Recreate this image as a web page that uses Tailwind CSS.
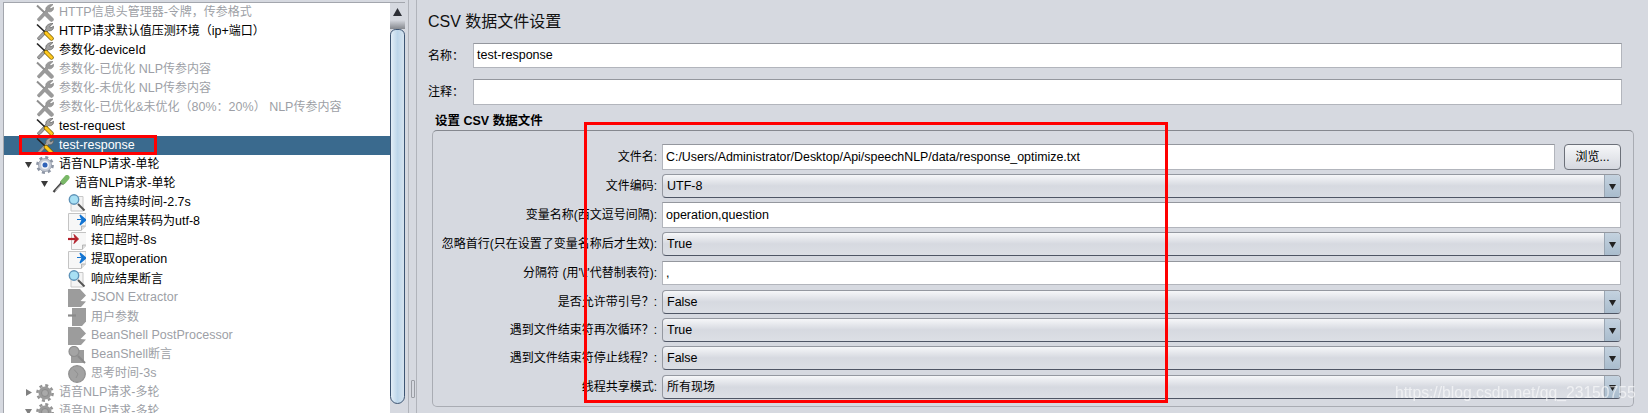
<!DOCTYPE html>
<html lang="zh-CN">
<head>
  <meta charset="UTF-8" />
  <title>CSV 数据文件设置</title>
  <script src="https://cdn.jsdelivr.net/npm/@tailwindcss/browser@4"></script>
</head>
<body class="bg-[#d6d9e0] overflow-hidden">
  <svg width="0" height="0" class="absolute">
    <defs>
      <symbol id="tool" viewBox="0 0 18 18">
        <path d="M17 .5 13.800 3.400l.8 1.600 2.900-1.700c.6 2.900-2.300 5.200-5 4.300L4 16.500c-1 1.200-3.200-.6-2.200-1.800L10 6c-1-3 3-6 7-5.500Z" fill="#a2a2a2" stroke="#5a5a5a" stroke-width=".7"/>
        <path d="M1 1.500 9.500 9.500" stroke="#222" stroke-width="1.600"/>
        <path d="M10 10 15.500 15.500" stroke="#7a5e00" stroke-width="4.400" stroke-linecap="round"/>
        <path d="M10 10 15.500 15.500" stroke="#ffc81e" stroke-width="3" stroke-linecap="round"/>
      </symbol>
      <symbol id="tool-off" viewBox="0 0 18 18">
        <path d="M17 .5 13.800 3.400l.8 1.600 2.900-1.700c.6 2.900-2.300 5.200-5 4.300L4 16.500c-1 1.200-3.200-.6-2.200-1.800L10 6c-1-3 3-6 7-5.500Z" fill="#9a9a9a" stroke="#8a8a8a" stroke-width=".8"/>
        <path d="M1 1.500 9.500 9.500" stroke="#8f8f8f" stroke-width="2"/>
        <path d="M10 10 15.500 15.500" stroke="#9a9a9a" stroke-width="4.500" stroke-linecap="round"/>
      </symbol>
      <symbol id="gear" viewBox="0 0 18 18">
        <circle cx="9" cy="9" r="7.600" fill="none" stroke="#8d95a4" stroke-width="2.600" stroke-dasharray="3 2.970"/>
        <circle cx="9" cy="9" r="6.500" fill="#c6cbd5" stroke="#8d95a4" stroke-width=".8"/>
        <circle cx="9" cy="9" r="3.900" fill="#f2f4f8"/>
        <circle cx="9" cy="9" r="2.500" fill="#2f62b8"/>
      </symbol>
      <symbol id="gear-off" viewBox="0 0 18 18">
        <circle cx="9" cy="9" r="7.600" fill="none" stroke="#949494" stroke-width="2.600" stroke-dasharray="3 2.970"/>
        <circle cx="9" cy="9" r="6.500" fill="#9a9a9a"/>
        <circle cx="9" cy="9" r="3.500" fill="#a9a9a9" stroke="#8a8a8a"/>
      </symbol>
      <symbol id="dropper" viewBox="0 0 18 18">
        <path d="M1.500 17 10.500 7" stroke="#444" stroke-width="2.200"/>
        <path d="M3.500 15.500 10.500 8" stroke="#e4e4e4" stroke-width=".8"/>
        <path d="M9 6 12 9" stroke="#3c5a34" stroke-width="3"/>
        <path d="M11.500 6.500 15 2.500" stroke="#7ab868" stroke-width="5" stroke-linecap="round"/>
      </symbol>
      <symbol id="search" viewBox="0 0 18 18">
        <path d="M3 2.500H15V17H3Z" fill="#f4f4f4" stroke="#c8c8c8"/>
        <path d="M10 10 16.500 16.500" stroke="#555" stroke-width="2"/>
        <circle cx="6" cy="5.500" r="4.700" fill="#a8e0f4" stroke="#5f93b8" stroke-width="1.400"/>
      </symbol>
      <symbol id="search-off" viewBox="0 0 18 18">
        <path d="M3 4H16V17H3Z" fill="#9c9c9c"/>
        <path d="M10 10 17 17" stroke="#8a8a8a" stroke-width="2"/>
        <circle cx="6" cy="5.500" r="5" fill="#a4a4a4" stroke="#8e8e8e" stroke-width="1.200"/>
      </symbol>
      <symbol id="post" viewBox="0 0 18 18">
        <path d="M.5 .5H18V12.500L13 17.500H.5Z" fill="#f7f7f7" stroke="#c4c4c4"/>
        <path d="M17.500 13H13.500V17.500" fill="#ddd" stroke="#aaa" stroke-width=".8"/>
        <path d="M9 6.500H13M12 2 18 7 12 12 14 7Z" fill="#1274d2" stroke="#1274d2" stroke-width="1.200"/>
      </symbol>
      <symbol id="pre" viewBox="0 0 18 18">
        <path d="M3.500 .5H19V12.500L14 17.500H3.500Z" fill="#f7f7f7" stroke="#c4c4c4"/>
        <path d="M18.500 13H14.500V17.500" fill="#ddd" stroke="#aaa" stroke-width=".8"/>
        <path d="M0 7H7" stroke="#b3202a" stroke-width="2.200"/>
        <path d="M6 2.500 10.500 7 6 11.500 7.500 7Z" fill="#b3202a" stroke="#b3202a"/>
      </symbol>
      <symbol id="post-off" viewBox="0 0 18 18">
        <path d="M0 0H12L18 6.500 12.500 12 18 12.500 13 18H0Z" fill="#9c9c9c"/>
      </symbol>
      <symbol id="pre-off" viewBox="0 0 18 18">
        <path d="M4 0H19V12.500L14 18H4Z" fill="#9c9c9c"/>
        <path d="M0 7.500H8" stroke="#8a8a8a" stroke-width="2.200"/>
      </symbol>
      <symbol id="clock-off" viewBox="0 0 18 18">
        <circle cx="9" cy="9" r="8.300" fill="#a2a2a2" stroke="#8e8e8e" stroke-width="1.200"/>
        <path d="M6 4.500 10 9 8 13" fill="none" stroke="#8a8a8a" stroke-width=".8"/>
      </symbol>
      <symbol id="caret-down" viewBox="0 0 7 7"><path d="M0 1H7L3.500 7Z"/></symbol>
      <symbol id="caret-right" viewBox="0 0 7 7"><path d="M1 0V7L7 3.500Z"/></symbol>
    </defs>
  </svg>

  <div class="relative flex w-[1648px] h-[413px] overflow-hidden text-black font-['Liberation_Sans','Noto_Sans_CJK_SC',sans-serif]">
    <!-- left tree -->
    <div class="w-[405px] h-full shrink-0 pl-[3px] pt-[2px]">
      <div class="flex h-[420px] border-l border-t border-[#a3a6ad] bg-white">
        <div id="tree" class="w-[386px] shrink-0"></div>
        <div class="w-[15px] shrink-0 bg-[#d6d9e0] flex flex-col items-center">
          <div class="h-[17px] w-full pt-[5px] flex justify-center">
            <svg width="9" height="8" viewBox="0 0 9 8"><path d="M4.500 0 9 8H0Z" fill="#2d2f36"/></svg>
          </div>
          <div class="h-[9px] w-full bg-linear-to-b from-[#d6d9e0] to-[#85888e]"></div>
          <div class="w-full h-[375px] rounded-b-[9px] rounded-t-[7px] border border-[#3d5573] bg-linear-to-r from-[#e3eef7] via-[#bdd6ea] to-[#d5e3ef]"></div>
        </div>
      </div>
    </div>

    <!-- divider -->
    <div class="relative w-[13px] shrink-0 flex">
      <div class="ml-[3px] w-[9px] h-full border-x border-[#b1b4bb]"></div>
      <div class="absolute left-[6px] top-[380px] w-[4px] h-[18px] border border-[#9a9da4] rounded-[1px]"></div>
    </div>

    <!-- right settings panel -->
    <div class="flex-1 pl-[10px] pr-[14px] flex flex-col bg-[#d6d9e0]">
      <div class="h-[24px] mt-[10px] flex items-center text-[16px] text-[#111]">CSV 数据文件设置</div>

      <div class="flex items-center h-[25px] mt-[9px] mr-[12px]">
        <div class="w-[45px] shrink-0 text-[12px]">名称：</div>
        <div class="flex-1 h-full bg-white border border-[#b2b5bc] border-t-[#94979e] flex items-center pl-[3px] text-[12.5px]">test-response</div>
      </div>
      <div class="flex items-center h-[26px] mt-[11px] mr-[12px]">
        <div class="w-[45px] shrink-0 text-[12px]">注释：</div>
        <div class="flex-1 h-full bg-white border border-[#b2b5bc] border-t-[#94979e]"></div>
      </div>

      <div class="ml-[4px] h-[17px] mt-[8px] pl-[3px] flex items-center text-[12.5px] font-bold">设置 CSV 数据文件</div>
      <div class="ml-[4px] h-[277px] border border-[#a9acb3] border-t-[#85888f] rounded-[5px] pt-[13px] pr-[12px] text-[12px]">

        <div class="flex items-center h-[26px]">
          <div class="w-[224px] shrink-0 text-right mr-[5px]">文件名:</div>
          <div class="flex-1 h-full bg-white border border-[#b2b5bc] border-t-[#94979e] flex items-center pl-[3px] text-[12.4px]">C:/Users/Administrator/Desktop/Api/speechNLP/data/response_optimize.txt</div>
          <div class="ml-[9px] w-[57px] h-full rounded-[4px] border border-[#6c7079] bg-linear-to-b from-[#f6f7f9] to-[#d5d8df] flex items-center justify-center">浏览...</div>
        </div>

        <div class="flex items-center h-[24px] mt-[4px]">
          <div class="w-[224px] shrink-0 text-right mr-[5px]">文件编码:</div>
          <div class="flex-1 h-full flex rounded-[4px] border border-[#9498a0] border-b-[#4f5665] bg-linear-to-b from-[#f6f7f9] via-[#d6d9e0] to-[#dcdfe5] overflow-hidden">
            <div class="flex-1 flex items-center pl-[4px] text-[12.5px]">UTF-8</div>
            <div class="w-[16px] bg-linear-to-b from-[#c4d2df] to-[#a9bccd] border-l border-[#9aa6b3] flex items-center justify-center"><svg width="7" height="7" class="fill-[#222]"><use href="#caret-down"/></svg></div>
          </div>
        </div>

        <div class="flex items-center h-[26px] mt-[4px]">
          <div class="w-[224px] shrink-0 text-right mr-[5px]">变量名称(西文逗号间隔):</div>
          <div class="flex-1 h-full bg-white border border-[#b2b5bc] border-t-[#94979e] flex items-center pl-[3px] text-[12.5px]">operation,question</div>
        </div>

        <div class="flex items-center h-[24px] mt-[4px]">
          <div class="w-[224px] shrink-0 text-right mr-[5px] whitespace-nowrap">忽略首行(只在设置了变量名称后才生效):</div>
          <div class="flex-1 h-full flex rounded-[4px] border border-[#9498a0] border-b-[#4f5665] bg-linear-to-b from-[#f6f7f9] via-[#d6d9e0] to-[#dcdfe5] overflow-hidden">
            <div class="flex-1 flex items-center pl-[4px] text-[12.5px]">True</div>
            <div class="w-[16px] bg-linear-to-b from-[#c4d2df] to-[#a9bccd] border-l border-[#9aa6b3] flex items-center justify-center"><svg width="7" height="7" class="fill-[#222]"><use href="#caret-down"/></svg></div>
          </div>
        </div>

        <div class="flex items-center h-[24px] mt-[5px]">
          <div class="w-[224px] shrink-0 text-right mr-[5px]">分隔符 (用'\t'代替制表符):</div>
          <div class="flex-1 h-full bg-white border border-[#b2b5bc] border-t-[#94979e] flex items-center pl-[3px] text-[12.5px]">,</div>
        </div>

        <div class="flex items-center h-[24px] mt-[5px]">
          <div class="w-[224px] shrink-0 text-right mr-[5px]">是否允许带引号？:</div>
          <div class="flex-1 h-full flex rounded-[4px] border border-[#9498a0] border-b-[#4f5665] bg-linear-to-b from-[#f6f7f9] via-[#d6d9e0] to-[#dcdfe5] overflow-hidden">
            <div class="flex-1 flex items-center pl-[4px] text-[12.5px]">False</div>
            <div class="w-[16px] bg-linear-to-b from-[#c4d2df] to-[#a9bccd] border-l border-[#9aa6b3] flex items-center justify-center"><svg width="7" height="7" class="fill-[#222]"><use href="#caret-down"/></svg></div>
          </div>
        </div>

        <div class="flex items-center h-[24px] mt-[4px]">
          <div class="w-[224px] shrink-0 text-right mr-[5px]">遇到文件结束符再次循环？:</div>
          <div class="flex-1 h-full flex rounded-[4px] border border-[#9498a0] border-b-[#4f5665] bg-linear-to-b from-[#f6f7f9] via-[#d6d9e0] to-[#dcdfe5] overflow-hidden">
            <div class="flex-1 flex items-center pl-[4px] text-[12.5px]">True</div>
            <div class="w-[16px] bg-linear-to-b from-[#c4d2df] to-[#a9bccd] border-l border-[#9aa6b3] flex items-center justify-center"><svg width="7" height="7" class="fill-[#222]"><use href="#caret-down"/></svg></div>
          </div>
        </div>

        <div class="flex items-center h-[24px] mt-[4px]">
          <div class="w-[224px] shrink-0 text-right mr-[5px]">遇到文件结束符停止线程？:</div>
          <div class="flex-1 h-full flex rounded-[4px] border border-[#9498a0] border-b-[#4f5665] bg-linear-to-b from-[#f6f7f9] via-[#d6d9e0] to-[#dcdfe5] overflow-hidden">
            <div class="flex-1 flex items-center pl-[4px] text-[12.5px]">False</div>
            <div class="w-[16px] bg-linear-to-b from-[#c4d2df] to-[#a9bccd] border-l border-[#9aa6b3] flex items-center justify-center"><svg width="7" height="7" class="fill-[#222]"><use href="#caret-down"/></svg></div>
          </div>
        </div>

        <div class="flex items-center h-[24px] mt-[5px]">
          <div class="w-[224px] shrink-0 text-right mr-[5px]">线程共享模式:</div>
          <div class="flex-1 h-full flex rounded-[4px] border border-[#9498a0] border-b-[#4f5665] bg-linear-to-b from-[#f6f7f9] via-[#d6d9e0] to-[#dcdfe5] overflow-hidden">
            <div class="flex-1 flex items-center pl-[4px]">所有现场</div>
            <div class="w-[16px] bg-linear-to-b from-[#c4d2df] to-[#a9bccd] border-l border-[#9aa6b3] flex items-center justify-center"><svg width="7" height="7" class="fill-[#222]"><use href="#caret-down"/></svg></div>
          </div>
        </div>
      </div>
    </div>

    <!-- red annotation boxes drawn over the screenshot -->
    <div class="absolute left-[19px] top-[135px] w-[138px] h-[20px] border-[3px] border-[#ff0000]"></div>
    <div class="absolute left-[584px] top-[122px] w-[584px] h-[281px] border-[3px] border-[#ff0000]"></div>

    <!-- watermark -->
    <div class="absolute left-[1395px] top-[383px] text-[15.7px] leading-[20px] text-white/60 whitespace-nowrap blur-[0.4px]">https://blog.csdn.net/qq_23150755</div>
  </div>

  <script>
    // Tree data: level 1-3, icon symbol, label, off = disabled element
    const treeRows = [
      { level: 1, icon: 'tool-off', text: 'HTTP信息头管理器-令牌，传参格式', off: true },
      { level: 1, icon: 'tool', text: 'HTTP请求默认值压测环境（ip+端口）' },
      { level: 1, icon: 'tool', text: '参数化-deviceId' },
      { level: 1, icon: 'tool-off', text: '参数化-已优化 NLP传参内容', off: true },
      { level: 1, icon: 'tool-off', text: '参数化-未优化 NLP传参内容', off: true },
      { level: 1, icon: 'tool-off', text: '参数化-已优化&未优化（80%：20%） NLP传参内容', off: true },
      { level: 1, icon: 'tool', text: 'test-request' },
      { level: 1, icon: 'tool', text: 'test-response', selected: true },
      { level: 1, icon: 'gear', text: '语音NLP请求-单轮', caret: 'caret-down' },
      { level: 2, icon: 'dropper', text: '语音NLP请求-单轮', caret: 'caret-down' },
      { level: 3, icon: 'search', text: '断言持续时间-2.7s' },
      { level: 3, icon: 'post', text: '响应结果转码为utf-8' },
      { level: 3, icon: 'pre', text: '接口超时-8s' },
      { level: 3, icon: 'post', text: '提取operation' },
      { level: 3, icon: 'search', text: '响应结果断言' },
      { level: 3, icon: 'post-off', text: 'JSON Extractor', off: true },
      { level: 3, icon: 'pre-off', text: '用户参数', off: true },
      { level: 3, icon: 'post-off', text: 'BeanShell PostProcessor', off: true },
      { level: 3, icon: 'search-off', text: 'BeanShell断言', off: true },
      { level: 3, icon: 'clock-off', text: '思考时间-3s', off: true },
      { level: 1, icon: 'gear-off', text: '语音NLP请求-多轮', caret: 'caret-right', off: true },
      { level: 1, icon: 'gear-off', text: '语音NLP请求-多轮', caret: 'caret-down', off: true }
    ];
    const indent = { 1: 'pl-[16px]', 2: 'pl-[32px]', 3: 'pl-[48px]' };

    // Latin runs are a touch bigger than the CJK around them
    function renderLabel(text) {
      return text.replace(/[\x20-\x7e]+/g, m => `<span class="text-[12.5px]">${m.replace(/&/g, '&amp;')}</span>`);
    }

    function renderRow(row) {
      const rowColor = row.selected ? 'bg-[#3a6a8e] text-white' : row.off ? 'text-[#9d9fa6]' : 'text-black';
      const caretColor = row.off ? 'fill-[#808080]' : 'fill-[#3a3a3a]';
      const caret = row.caret ? `<svg width="7" height="7" class="${caretColor}"><use href="#${row.caret}"/></svg>` : '';
      return `
        <div class="flex items-center h-[19px] text-[12px] whitespace-nowrap ${indent[row.level]} ${rowColor}">
          <div class="w-[16px] shrink-0 pl-[5px]">${caret}</div>
          <svg width="18" height="18" class="shrink-0 mr-[5px]"><use href="#${row.icon}"/></svg>
          <div>${renderLabel(row.text)}</div>
        </div>
      `;
    }

    document.getElementById('tree').innerHTML = treeRows.map(renderRow).join('');
  </script>
</body>
</html>
